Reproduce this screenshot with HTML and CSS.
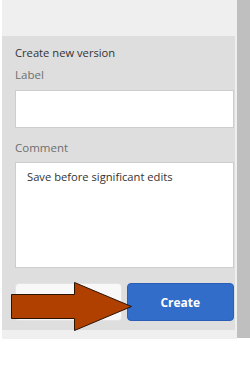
FILE: index.html
```html
<!DOCTYPE html>
<html lang="en">
<head>
    <meta charset="UTF-8">
    <meta name="viewport" content="width=device-width, initial-scale=1.0">
    <title>versions</title>
    <link rel="stylesheet" href="styles.css">
</head>
<body>
    <div class="frame">
        <div class="main">
            <div class="panel">
                <h2 class="title">Create new version</h2>
                <label class="field-label">Label</label>
                <input class="field-input" type="text">
                <label class="field-label comment-label">Comment</label>
                <textarea class="field-area">Save before significant edits</textarea>
                <div class="actions">
                    <button class="btn btn-cancel"></button>
                    <button class="btn btn-create">Create</button>
                </div>
            </div>
        </div>
        <div class="sidebar"></div>
    </div>

    <svg class="arrow" width="140" height="60" viewBox="0 0 140 60">
        <polygon points="11.5,12.5 74.5,12.5 74.5,0.5 131.5,24.5 74.5,48.5 74.5,36.5 11.5,36.5" fill="#b04000" stroke="#2b1300" stroke-width="1"/>
    </svg>
</body>
</html>
```

FILE: styles.css
```css
body {
    margin: 0;
    background: #fff;
    font-family: "Open Sans", "Noto Sans", sans-serif;
}

.frame {
    display: flex;
    padding-left: 2px;
}

.main {
    width: 235px;
    padding: 36px 2px 9px 0;
    box-sizing: border-box;
    background: #efefef;
}

.panel {
    display: flex;
    flex-direction: column;
    padding: 9px 1px 9px 13px;
    background: #dedede;
}

.title {
    margin: 0;
    font-size: 11.2px;
    font-weight: normal;
    line-height: 16px;
    color: #333;
}

.field-label {
    margin-top: 6px;
    font-size: 11.5px;
    line-height: 16px;
    color: #6e6e6e;
}

.comment-label {
    margin-top: 12px;
}

.field-input,
.field-area {
    margin: 6px 0 0;
    border: 1px solid #cdcdcd;
    background: #fff;
    box-sizing: border-box;
    outline: none;
    font-family: inherit;
}

.field-input {
    height: 38px;
    margin-top: 7px;
}

.field-area {
    height: 106px;
    padding: 6px 11px;
    resize: none;
    font-size: 11.2px;
    line-height: 16px;
    color: #333;
}

.actions {
    display: flex;
    gap: 5px;
    margin-top: 15px;
}

.btn {
    height: 38px;
    border-radius: 4px;
    font-family: inherit;
    font-size: 12px;
    font-weight: bold;
}

.btn-cancel {
    width: 107px;
    border: 1px solid #e4e4e4;
    background: #f8f8f8;
}

.btn-create {
    width: 108px;
    border: 1px solid #2a5db5;
    background: #326dc9;
    color: #fff;
}

.sidebar {
    width: 13px;
    height: 338px;
    background: #bfbfbf;
}

.arrow {
    position: absolute;
    left: 0;
    top: 282px;
}
```
